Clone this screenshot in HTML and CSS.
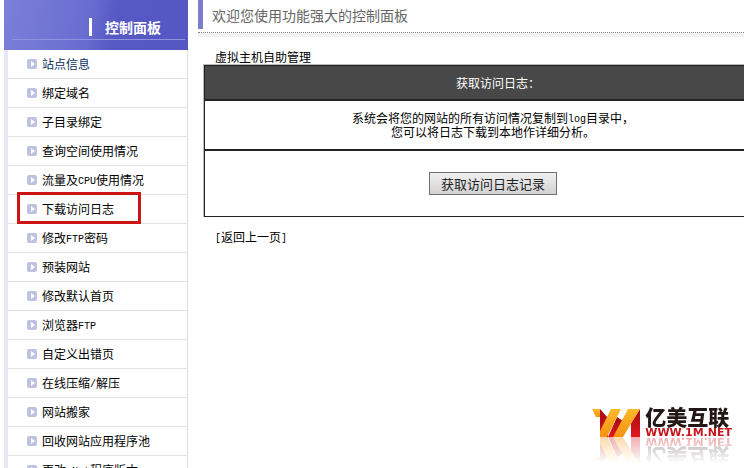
FILE: index.html
```
<!DOCTYPE html>
<html lang="zh-CN">
<head>
    <meta charset="UTF-8">
    <meta name="viewport" content="width=device-width, initial-scale=1.0">
    <title>控制面板</title>
    <link rel="stylesheet" href="styles.css">
</head>
<body>
    <nav class="sidebar">
        <h2 class="sidebar-title"><span>控制面板</span></h2>
        <ul class="menu">
            <li><a class="current" href="#">站点信息</a></li>
            <li><a href="#">绑定域名</a></li>
            <li><a href="#">子目录绑定</a></li>
            <li><a href="#">查询空间使用情况</a></li>
            <li><a href="#">流量及<span class="en">CPU</span>使用情况</a></li>
            <li class="marked"><a href="#">下载访问日志</a></li>
            <li><a href="#">修改<span class="en">FTP</span>密码</a></li>
            <li><a href="#">预装网站</a></li>
            <li><a href="#">修改默认首页</a></li>
            <li><a href="#">浏览器<span class="en">FTP</span></a></li>
            <li><a href="#">自定义出错页</a></li>
            <li><a href="#">在线压缩<span class="en">/</span>解压</a></li>
            <li><a href="#">网站搬家</a></li>
            <li><a href="#">回收网站应用程序池</a></li>
            <li><a href="#">更改<span class="en">.Net</span>程序版本</a></li>
        </ul>
    </nav>

    <main class="content">
        <h1 class="welcome">欢迎您使用功能强大的控制面板</h1>
        <div class="divider"></div>

        <div class="panel">
            <h3 class="panel-title">虚拟主机自助管理</h3>
            <table class="log-table">
                <tr>
                    <th>获取访问日志：</th>
                </tr>
                <tr>
                    <td class="desc">系统会将您的网站的所有访问情况复制到<span class="en">log</span>目录中，<br>您可以将日志下载到本地作详细分析。</td>
                </tr>
                <tr>
                    <td class="action"><button type="button" class="btn">获取访问日志记录</button></td>
                </tr>
            </table>
            <a class="back" href="#"><span class="en">[</span>返回上一页<span class="en">]</span></a>
        </div>
    </main>

    <div class="logo">
        <svg class="logo-mark" width="48" height="28" viewBox="0 0 48 28" aria-hidden="true">
            <defs>
                <linearGradient id="gold" x1="0" y1="0" x2="0" y2="1">
                    <stop offset="0" stop-color="#fdb928"/>
                    <stop offset="1" stop-color="#f39312"/>
                </linearGradient>
                <linearGradient id="red" x1="0" y1="0" x2="0" y2="1">
                    <stop offset="0" stop-color="#a00c12"/>
                    <stop offset="1" stop-color="#e3161d"/>
                </linearGradient>
            </defs>
            <path fill="url(#gold)" d="M0 0h8v8H4z"/>
            <path fill="url(#red)" d="M8 0l8 9v19H8z"/>
            <path fill="url(#red)" d="M25 8l6 4v16H16z"/>
            <path fill="url(#red)" d="M48 0v28h-9V14z"/>
            <path fill="url(#gold)" d="M19 0h10L15 28H8v-6z"/>
            <path fill="url(#gold)" d="M36 0h12L31 28H21z"/>
        </svg>
        <div class="logo-text">
            <span class="logo-name">亿美互联</span>
            <span class="logo-url">WWW.1M.NET</span>
        </div>
    </div>
</body>
</html>
```
FILE: styles.css
```
* {
    box-sizing: border-box;
}

body {
    display: flex;
    height: 100vh;
    margin: 0;
    padding-left: 4px;
    overflow: hidden;
    background-color: #fff;
    color: #000;
    font-family: "Noto Sans CJK SC", sans-serif;
    font-size: 12px;
    line-height: 14px;
}

a {
    color: inherit;
    text-decoration: none;
}

h1, h2, h3, ul {
    margin: 0;
    padding: 0;
    font-size: 12px;
    font-weight: normal;
}

/* half-width latin inside chinese text */
.en {
    font-family: "Liberation Mono", monospace;
    font-size: 10px;
    line-height: 1;
    vertical-align: 1px;
}

/* sidebar */
.sidebar {
    flex: none;
    width: 184px;
    background-color: #e6e6f5;
}

.sidebar-title {
    height: 50px;
    padding: 18px 3px 0 8px;
    background: linear-gradient(100deg, #7c80d8 0%, #6a6dd0 45%, #5658c4 60%, #5557c4 100%);
    color: #fff;
    font-size: 14px;
    font-weight: bold;
    line-height: 18px;
}

.sidebar-title span {
    display: block;
    height: 22px;
    padding-left: 93px;
    border-bottom: 1px solid #8f92e0;
    background: linear-gradient(#fff, #fff) 77px 0 / 3px 18px no-repeat;
}

.menu {
    margin-left: 4px;
    border-right: 1px solid #dcdce4;
    background-color: #fff;
    list-style: none;
}

.menu li {
    position: relative;
    height: 29px;
    border-bottom: 1px solid #e2e2e8;
}

.menu a {
    display: block;
    padding-left: 34px;
    background: url("data:image/svg+xml,%3Csvg xmlns='http://www.w3.org/2000/svg' width='10' height='10'%3E%3Crect width='10' height='10' rx='2' fill='%23bfc1e0'/%3E%3Cpath fill='%23fff' d='M4 2l4 3-4 3z'/%3E%3C/svg%3E") 19px 9px no-repeat;
    line-height: 28px;
    white-space: nowrap;
}

.menu .current {
    color: #0a3263;
}

.menu .marked::after {
    content: "";
    position: absolute;
    top: -3px;
    left: 9px;
    box-sizing: border-box;
    width: 124px;
    height: 32px;
    border: 3px solid #cc1414;
}

/* content */
.content {
    flex: 1;
    min-width: 0;
    padding-left: 10px;
}

.welcome {
    height: 29px;
    padding: 6px 0 0 9px;
    border-left: 5px solid #7b7dce;
    color: #666;
    font-size: 14px;
    line-height: 18px;
}

.divider {
    height: 5px;
    margin-top: 3px;
    border-top: 1px dotted #888;
    background-color: #f2f2f2;
}

/* the table runs on under the right edge */
.panel {
    margin: 13px -38px 0 5px;
}

.panel-title {
    padding-left: 12px;
}

.log-table {
    width: 100%;
    border-top: 1px solid #bbb;
    border-left: 1px solid #bbb;
    border-spacing: 0;
    text-align: center;
}

.log-table th,
.log-table td {
    padding: 0;
    border: 1px solid #222;
}

.log-table th {
    height: 35px;
    padding-left: 10px;
    background-color: #484848;
    color: #fff;
    font-weight: normal;
}

.log-table .desc {
    height: 50px;
}

.log-table .action {
    height: 67px;
}

.btn {
    padding: 2px 11px;
    border: 1px solid #707070;
    background: linear-gradient(#f0f0f0, #d2d2d2);
    color: #222;
    font-family: inherit;
    font-size: 13px;
    line-height: 17px;
}

.back {
    display: block;
    margin: 13px 0 0 12px;
}

/* logo over the page corner */
.logo {
    position: absolute;
    right: 12px;
    bottom: 31px;
    display: flex;
    align-items: flex-end;
    gap: 5px;
    -webkit-box-reflect: below 0 linear-gradient(transparent 15%, rgba(0, 0, 0, 0.35));
}

.logo-mark {
    display: block;
}

.logo-text {
    display: flex;
    flex-direction: column;
    gap: 2px;
}

.logo-name {
    color: #231815;
    font-size: 21px;
    font-weight: 900;
    line-height: 21px;
}

.logo-url {
    color: #c8161d;
    font-family: "DejaVu Sans", sans-serif;
    font-size: 11px;
    font-weight: bold;
    line-height: 8px;
}
```
